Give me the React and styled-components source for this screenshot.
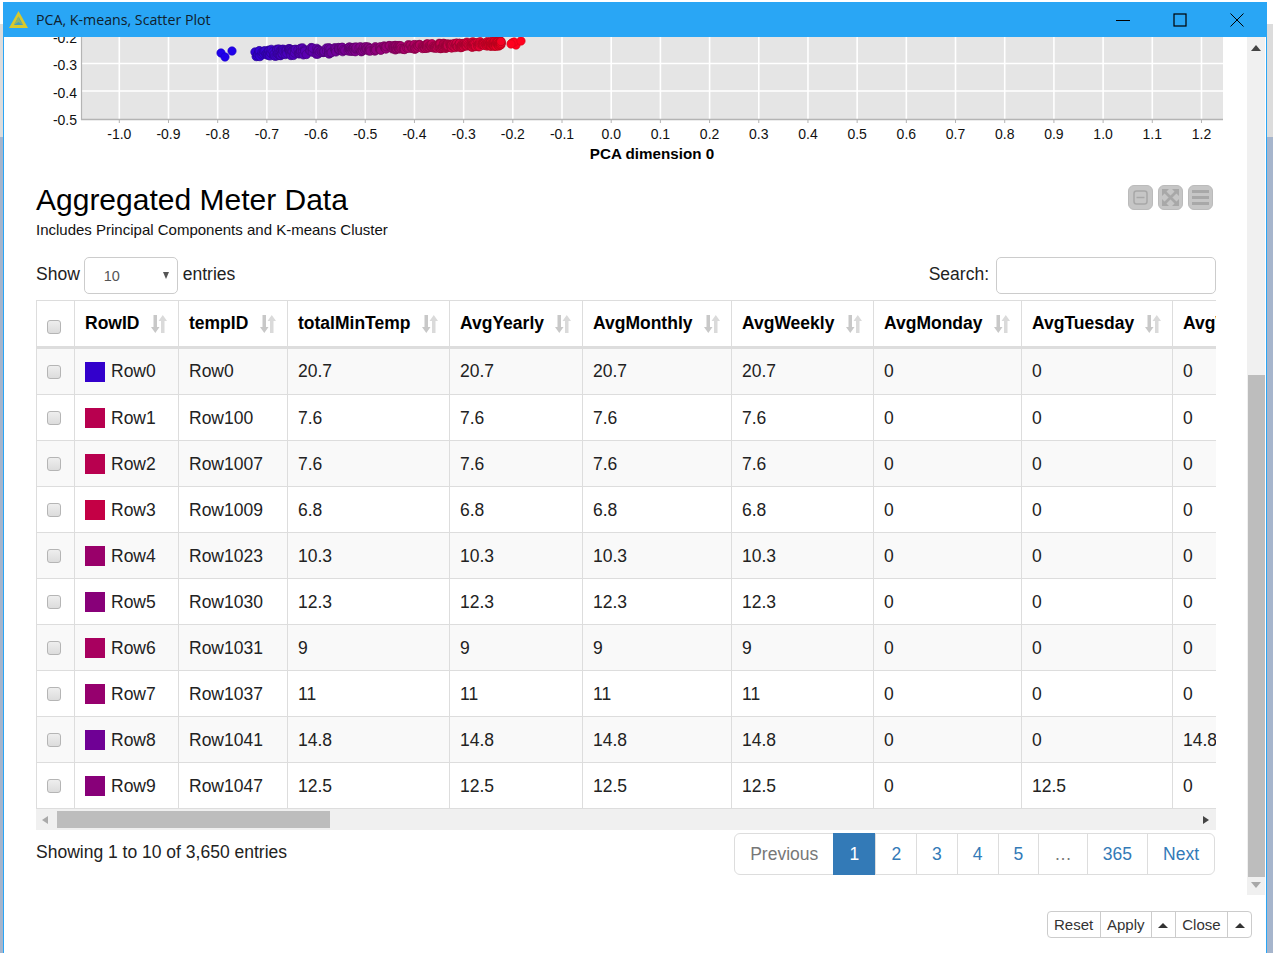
import React from 'react';
import styled, { createGlobalStyle } from 'styled-components';

const GlobalStyle = createGlobalStyle`
  html, body { margin: 0; padding: 0; height: 953px; overflow: hidden; }
  body {
    font-family: "Liberation Sans", Arial, sans-serif;
    background: linear-gradient(to bottom, #fff 0 24px, #dcdcdc 24px 137px, #a6b5cc 137px);
  }
`;

const Desktop = styled.div`
  display: flex;
  height: 953px;
  padding: 2px 6px 0 3px;
  box-sizing: border-box;
`;
const Window = styled.div`
  flex: 1;
  display: flex;
  flex-direction: column;
  min-width: 0;
  background: #fff;
  border-left: 1px solid #2aa5f5;
  border-right: 1px solid #2aa5f5;
`;
const TitleBar = styled.div`
  display: flex;
  align-items: center;
  height: 35px;
  margin: 0 -1px;
  padding: 0 2px 0 6px;
  background: #29a6f5;
  flex: none;
`;
const TitleText = styled.span`
  margin-left: 8px;
  font-family: "Open Sans", sans-serif;
  font-size: 14.2px;
  color: #10202c;
  flex: 1;
`;
const WinButton = styled.div`
  width: 57px;
  display: flex;
  justify-content: center;
`;
const Body = styled.div`
  display: flex;
  height: 858px;
  flex: none;
`;
const Pane = styled.div`
  flex: 1;
  min-width: 0;
  overflow: hidden;
`;
const ChartSvg = styled.svg`
  display: block;
`;
const Section = styled.div`
  padding: 17px 31px 0 32px;
`;
const HeadRow = styled.div`
  display: flex;
  justify-content: space-between;
  align-items: flex-start;
`;
const Title = styled.h1`
  margin: 0;
  font-size: 30px;
  line-height: 35px;
  font-weight: 400;
  color: #000;
`;
const Subtitle = styled.p`
  margin: 4px 0 0;
  font-size: 15px;
  line-height: 18px;
  color: #111;
`;
const IconGroup = styled.div`
  display: flex;
  gap: 5px;
  margin: 3px 3px 0 0;
`;
const IconButton = styled.div`
  width: 25px;
  height: 25px;
  box-sizing: border-box;
  border: 1px solid #bbb;
  border-radius: 6px;
  background: #c6c6c6;
  display: flex;
  align-items: center;
  justify-content: center;
`;
const Controls = styled.div`
  display: flex;
  justify-content: space-between;
  align-items: center;
  height: 37px;
  margin: 18px 0 6px;
  font-size: 17.5px;
  color: #222;
`;
const FieldLabel = styled.label`
  display: flex;
  align-items: center;
  gap: ${(p) => p.$gap}px;
  margin-top: -2px;
`;
const FakeSelect = styled.div`
  width: 94px;
  height: 37px;
  margin: 2px 1px 0 0;
  box-sizing: border-box;
  border: 1px solid #ccc;
  border-radius: 5px;
  padding: 0 8px 0 19px;
  display: flex;
  align-items: center;
  justify-content: space-between;
  font-size: 14.5px;
  color: #555;
`;
const SelectArrow = styled.span`
  width: 0;
  height: 0;
  border-left: 3.5px solid transparent;
  border-right: 3.5px solid transparent;
  border-top: 7px solid #555;
`;
const SearchInput = styled.input`
  width: 220px;
  height: 37px;
  box-sizing: border-box;
  border: 1px solid #ccc;
  border-radius: 5px;
  margin-top: 2px;
  outline: none;
`;
const TableClip = styled.div`
  width: 1180px;
  overflow: hidden;
`;
const Table = styled.table`
  border-collapse: separate;
  border-spacing: 0;
  table-layout: fixed;
  width: 1340px;
  font-size: 17.5px;
  color: #222;
`;
const Column = styled.col`
  width: ${(p) => p.$w}px;
`;
const Th = styled.th`
  height: 49px;
  box-sizing: border-box;
  padding: 0 0 0 10px;
  text-align: left;
  font-weight: 700;
  color: #000;
  white-space: nowrap;
  border-top: 1px solid #ddd;
  border-left: 1px solid #ddd;
  border-bottom: 3px solid #ddd;
`;
const ThInner = styled.div`
  display: flex;
  justify-content: space-between;
  align-items: center;
  padding-right: 11px;
`;
const Tr = styled.tr`
  background: ${(p) => (p.$odd ? '#f9f9f9' : '#fff')};
`;
const Td = styled.td`
  height: 46px;
  box-sizing: border-box;
  padding: 2px 0 0 10px;
  white-space: nowrap;
  overflow: hidden;
  border-left: 1px solid #ddd;
  border-bottom: 1px solid #ddd;

  tr:first-child > & {
    padding-top: 0;
  }
`;
const CheckCell = styled.div`
  display: flex;
  justify-content: center;
  margin-left: -10px;
  padding-right: 4px;
`;
const Check = styled.span`
  display: block;
  width: 14px;
  height: 14px;
  box-sizing: border-box;
  border: 1px solid #b5b5b5;
  border-radius: 3px;
  background: linear-gradient(#eee, #dcdcdc);
  margin-top: ${(p) => (p.$head ? '7px' : '0')};
  margin-bottom: ${(p) => (p.$up ? '2px' : '0')};
`;
const RowLabel = styled.div`
  display: flex;
  align-items: center;
  gap: 6px;
`;
const Swatch = styled.span`
  width: 20px;
  height: 20px;
  background: ${(p) => p.$color};
  margin-bottom: ${(p) => (p.$up ? '2px' : '0')};
`;
const HScroll = styled.div`
  display: flex;
  align-items: center;
  height: 21px;
  background: #f0f0f0;
`;
const HArrow = styled.span`
  width: 0;
  height: 0;
  border-top: 4.5px solid transparent;
  border-bottom: 4.5px solid transparent;
  ${(p) => (p.$right ? 'border-left: 6px solid #444; margin: 0 7px 0 auto;' : 'border-right: 6px solid #aaa; margin: 0 9px 0 6px;')}
`;
const HThumb = styled.div`
  width: 273px;
  height: 17px;
  background: #bdbdbd;
`;
const InfoRow = styled.div`
  display: flex;
  justify-content: space-between;
  align-items: flex-start;
  margin-top: 3px;
`;
const InfoText = styled.div`
  font-size: 17.5px;
  line-height: 38px;
  color: #222;
`;
const Pager = styled.div`
  display: flex;
  height: 42px;
  margin-right: 1px;
  box-sizing: border-box;
  border: 1px solid #ddd;
  border-radius: 6px;
  font-size: 17.5px;
`;
const PageItem = styled.div`
  display: flex;
  align-items: center;
  padding: 0 ${(p) => (p.$active ? '16.2px' : '15px')};
  color: ${(p) => (p.$active ? '#fff' : p.$muted ? '#777' : '#337ab7')};
  background: ${(p) => (p.$active ? '#337ab7' : 'transparent')};
  margin: ${(p) => (p.$active ? '-1px 0' : '0')};
  border-left: ${(p) => (p.$first || p.$active ? 'none' : '1px solid #ddd')};
`;
const VScroll = styled.div`
  width: 18px;
  flex: none;
  margin-right: 1px;
  background: #f0f0f0;
  display: flex;
  flex-direction: column;
  align-items: center;
`;
const VArrow = styled.span`
  width: 0;
  height: 0;
  border-left: 5.5px solid transparent;
  border-right: 5.5px solid transparent;
  ${(p) => (p.$down ? 'border-top: 6px solid #a8a8a8; margin-top: 5px;' : 'border-bottom: 6px solid #444; margin-top: 8px;')}
`;
const VThumb = styled.div`
  width: 17px;
  height: 502px;
  margin-top: 324px;
  background: #bdbdbd;
`;
const Footer = styled.div`
  flex: 1;
  display: flex;
  justify-content: flex-end;
  align-items: flex-start;
  padding: 17px 14px 0 0;
`;
const BtnGroup = styled.div`
  display: flex;
  height: 27px;
  margin-top: -1px;
  box-sizing: border-box;
  border: 1px solid #ccc;
  border-radius: 4px;
  font-size: 15px;
  color: #333;
`;
const Btn = styled.div`
  display: flex;
  align-items: center;
  justify-content: center;
  padding: 0 ${(p) => (p.$narrow ? '5.9px' : '6.4px')};
  border-left: ${(p) => (p.$first ? 'none' : '1px solid #ccc')};
`;
const Caret = styled.span`
  width: 0;
  height: 0;
  margin: 2px 0.6px 0;
  border-left: 5px solid transparent;
  border-right: 5px solid transparent;
  border-bottom: 5px solid #333;
`;

const tickX = (i) => 119.3 + i * 49.19;
const xTicks = Array.from({ length: 23 }, (_, i) => ({
  x: tickX(i),
  label: (i * 0.1 - 1).toFixed(1),
}));

function makePoints() {
  const pts = [];
  let seed = 12345;
  const rnd = () => {
    seed = (seed * 16807) % 2147483647;
    return seed / 2147483647;
  };
  for (let i = 0; i < 420; i++) {
    const k = Math.pow(rnd(), 1.35);
    const x = 254 + (1 - k) * 247;
    const center = 53.5 - ((x - 254) / 247) * 10;
    const spread = x < 330 ? 3.6 : 2.6;
    pts.push({ x, y: center + (rnd() - 0.5) * 2 * spread });
  }
  pts.sort((a, b) => a.x - b.x);
  return pts;
}

const colorAt = (x, f) => {
  const t = Math.min(1, Math.max(0, (x - 230) / 280));
  const r = Math.round((30 + 225 * t) * f);
  const b = Math.round((235 - 205 * t) * f);
  return `rgb(${r},0,${b})`;
};

const points = makePoints();
const blueDots = [[221, 53], [225, 57], [232, 51]];
const redDots = [[512, 43], [516, 45], [514, 42], [521, 41], [511, 44]];

function Chart() {
  const axisFont = { fontFamily: '"Liberation Sans", sans-serif', fontSize: 14, fill: '#111' };
  return (
    <ChartSvg width="1243" height="128" viewBox="4 37 1243 128">
      <rect x="81" y="30" width="1142" height="89" fill="#e5e5e5" />
      {xTicks.map((t) => (
        <line key={t.label} x1={t.x} x2={t.x} y1="30" y2="119" stroke="#fff" strokeWidth="1.6" />
      ))}
      <line x1="81" x2="1223" y1="63.5" y2="63.5" stroke="#fff" strokeWidth="1.6" />
      <line x1="81" x2="1223" y1="91" y2="91" stroke="#fff" strokeWidth="1.6" />
      <line x1="81" x2="1223" y1="119.5" y2="119.5" stroke="#b4b4b4" strokeWidth="1.4" />
      <line x1="81.5" x2="81.5" y1="30" y2="120" stroke="#b4b4b4" strokeWidth="1.2" />
      {xTicks.map((t) => (
        <line key={t.label} x1={t.x} x2={t.x} y1="119" y2="123" stroke="#b4b4b4" />
      ))}
      {points.map((p, i) => (
        <circle key={i} cx={p.x} cy={p.y} r="4.3" fill={colorAt(p.x, 0.98)} stroke={colorAt(p.x, 0.72)} strokeWidth="0.7" />
      ))}
      {blueDots.concat(redDots).map(([x, y], i) => (
        <circle key={i} cx={x} cy={y} r="4.2" fill={colorAt(x, 1)} stroke={colorAt(x, 0.85)} strokeWidth="0.6" />
      ))}
      {[['-0.2', 43], ['-0.3', 70], ['-0.4', 98], ['-0.5', 125]].map(([l, y]) => (
        <text key={l} x="77" y={y} textAnchor="end" {...axisFont}>{l}</text>
      ))}
      {xTicks.map((t) => (
        <text key={t.label} x={t.x} y="139" textAnchor="middle" {...axisFont}>{t.label}</text>
      ))}
      <text x="652" y="159" textAnchor="middle" fontFamily='"Liberation Sans", sans-serif' fontSize="15.2" fontWeight="700" fill="#000">PCA dimension 0</text>
    </ChartSvg>
  );
}

const SortIcon = () => (
  <svg width="16" height="18" viewBox="0 0 16 18" style={{ flex: 'none' }}>
    <path d="M2.500 0h3.500v12h2.500l-4.200 6L0 12h2.500z" fill="#c8c8c8" />
    <path d="M10 18h3.500V6H16l-4.200-6-4.300 6H10z" fill="#dadada" />
  </svg>
);

const columns = [38, 104, 109, 162, 133, 149, 142, 148, 151, 204];
const headers = ['RowID', 'tempID', 'totalMinTemp', 'AvgYearly', 'AvgMonthly', 'AvgWeekly', 'AvgMonday', 'AvgTuesday', 'AvgWednesday'];
const rows = [
  ['Row0', 'Row0', '20.7', '#3300cc', 0, 0, 0],
  ['Row1', 'Row100', '7.6', '#b8004f', 0, 0, 0],
  ['Row2', 'Row1007', '7.6', '#b8004f', 0, 0, 0],
  ['Row3', 'Row1009', '6.8', '#c40045', 0, 0, 0],
  ['Row4', 'Row1023', '10.3', '#99006a', 0, 0, 0],
  ['Row5', 'Row1030', '12.3', '#880079', 0, 0, 0],
  ['Row6', 'Row1031', '9', '#a8005f', 0, 0, 0],
  ['Row7', 'Row1037', '11', '#96006e', 0, 0, 0],
  ['Row8', 'Row1041', '14.8', '#6f0095', 0, 0, '14.8'],
  ['Row9', 'Row1047', '12.5', '#880079', 0, '12.5', 0],
];
const pages = ['1', '2', '3', '4', '5', '…', '365'];

export default function App() {
  return (
    <Desktop>
      <GlobalStyle />
      <Window>
        <TitleBar>
          <svg width="19" height="19" viewBox="0 0 19 19">
            <path d="M9.500 1 19 18H0z" fill="#d9c92c" />
            <path d="M9.500 6.500 14 15H5z" fill="#3f9fc4" />
            <path d="M9.500 6.500 11 11l3 4-4.500-3L5 15z" fill="#8fb56f" />
          </svg>
          <TitleText>PCA, K-means, Scatter Plot</TitleText>
          <WinButton>
            <svg width="14" height="14" viewBox="0 0 14 14"><path d="M0 7.500h14" stroke="#000" /></svg>
          </WinButton>
          <WinButton>
            <svg width="14" height="14" viewBox="0 0 14 14"><rect x="1" y="1" width="12" height="12" fill="none" stroke="#000" strokeWidth="1.2" /></svg>
          </WinButton>
          <WinButton>
            <svg width="14" height="14" viewBox="0 0 14 14"><path d="M.5.5l13 13M13.500.5l-13 13" stroke="#000" /></svg>
          </WinButton>
        </TitleBar>
        <Body>
          <Pane>
            <Chart />
            <Section>
              <HeadRow>
                <div>
                  <Title>Aggregated Meter Data</Title>
                  <Subtitle>Includes Principal Components and K-means Cluster</Subtitle>
                </div>
                <IconGroup>
                  <IconButton>
                    <svg width="15" height="15" viewBox="0 0 15 15"><rect x="1" y="1" width="13" height="13" rx="2.500" fill="none" stroke="#a8a8a8" strokeWidth="1.500" /><path d="M3.500 7.500h8" stroke="#a8a8a8" strokeWidth="1.500" /></svg>
                  </IconButton>
                  <IconButton>
                    <svg width="17" height="17" viewBox="0 0 17 17"><path d="M0 0h7L0 7zM17 0v7L10 0zM0 17v-7l7 7zM17 17h-7l7-7z" fill="#a8a8a8" /><path d="M3 3l11 11M14 3L3 14" stroke="#a8a8a8" strokeWidth="2.600" /></svg>
                  </IconButton>
                  <IconButton>
                    <svg width="17" height="15" viewBox="0 0 17 15"><path d="M0 0h17v3H0zM0 6h17v3H0zM0 12h17v3H0z" fill="#a8a8a8" /></svg>
                  </IconButton>
                </IconGroup>
              </HeadRow>
              <Controls>
                <FieldLabel $gap={4}>
                  Show
                  <FakeSelect>10<SelectArrow /></FakeSelect>
                  entries
                </FieldLabel>
                <FieldLabel $gap={7}>
                  Search:
                  <SearchInput />
                </FieldLabel>
              </Controls>
              <TableClip>
                <Table>
                  <colgroup>
                    {columns.map((w, i) => <Column key={i} $w={w} />)}
                  </colgroup>
                  <thead>
                    <tr>
                      <Th><CheckCell><Check $head /></CheckCell></Th>
                      {headers.map((h) => (
                        <Th key={h}>
                          <ThInner>{h}<SortIcon /></ThInner>
                        </Th>
                      ))}
                    </tr>
                  </thead>
                  <tbody>
                    {rows.map((r, i) => (
                      <Tr key={r[0]} $odd={i % 2 === 0}>
                        <Td><CheckCell><Check $up={i > 0} /></CheckCell></Td>
                        <Td><RowLabel><Swatch $color={r[3]} $up={i > 0} />{r[0]}</RowLabel></Td>
                        <Td>{r[1]}</Td>
                        <Td>{r[2]}</Td>
                        <Td>{r[2]}</Td>
                        <Td>{r[2]}</Td>
                        <Td>{r[2]}</Td>
                        <Td>{r[4]}</Td>
                        <Td>{r[5]}</Td>
                        <Td>{r[6]}</Td>
                      </Tr>
                    ))}
                  </tbody>
                </Table>
                <HScroll>
                  <HArrow />
                  <HThumb />
                  <HArrow $right />
                </HScroll>
              </TableClip>
              <InfoRow>
                <InfoText>Showing 1 to 10 of 3,650 entries</InfoText>
                <Pager>
                  <PageItem $first $muted>Previous</PageItem>
                  {pages.map((p, i) => (
                    <PageItem key={p} $active={i === 0} $muted={p === '…'}>{p}</PageItem>
                  ))}
                  <PageItem>Next</PageItem>
                </Pager>
              </InfoRow>
            </Section>
          </Pane>
          <VScroll>
            <VArrow />
            <VThumb />
            <VArrow $down />
          </VScroll>
        </Body>
        <Footer>
          <BtnGroup>
            <Btn $first>Reset</Btn>
            <Btn>Apply</Btn>
            <Btn $narrow><Caret /></Btn>
            <Btn>Close</Btn>
            <Btn $narrow><Caret /></Btn>
          </BtnGroup>
        </Footer>
      </Window>
    </Desktop>
  );
}
